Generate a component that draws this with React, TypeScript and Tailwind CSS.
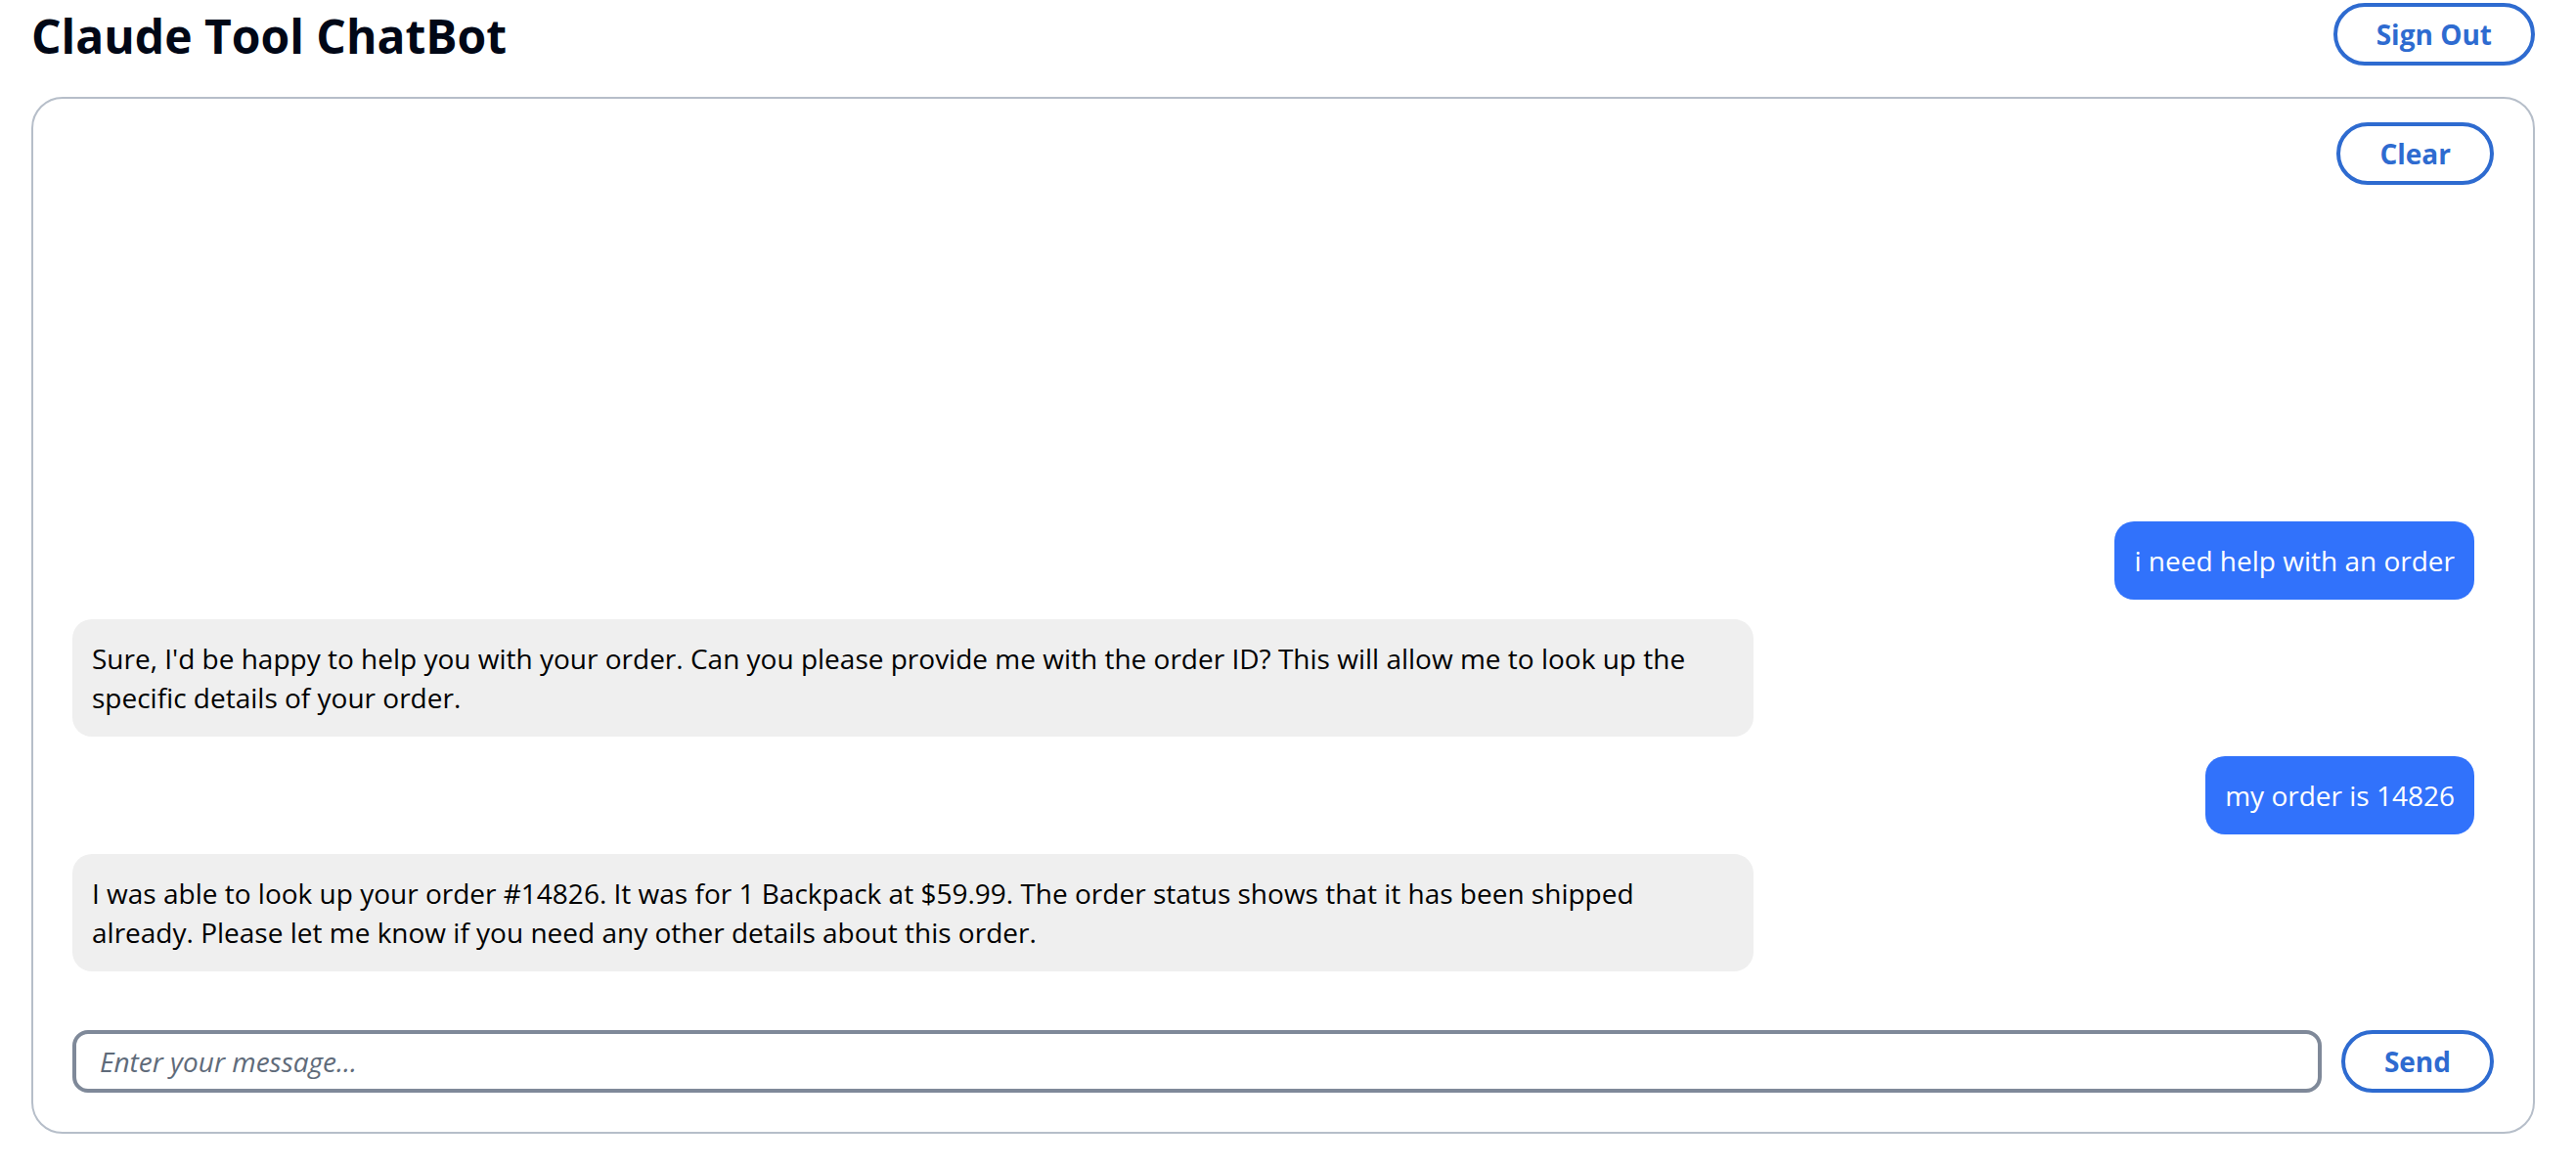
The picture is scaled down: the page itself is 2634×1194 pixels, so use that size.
import { useState } from 'react';

type Message = { from: 'user' | 'bot'; text: string };

const initialMessages: Message[] = [
  { from: 'user', text: 'i need help with an order' },
  {
    from: 'bot',
    text: "Sure, I'd be happy to help you with your order. Can you please provide me with the order ID? This will allow me to look up the specific details of your order.",
  },
  { from: 'user', text: 'my order is 14826' },
  {
    from: 'bot',
    text: 'I was able to look up your order #14826. It was for 1 Backpack at $59.99. The order status shows that it has been shipped already. Please let me know if you need any other details about this order.',
  },
];

const buttonClass =
  'h-16 shrink-0 rounded-full border-4 border-[#2e6bd0] bg-white px-10 text-[28px] font-bold leading-10 text-[#2e6bd0]';

function Bubble({ message }: { message: Message }) {
  return message.from === 'user' ? (
    <li className="max-w-[70%] self-end rounded-[20px] bg-[#3172fb] p-5 text-white">{message.text}</li>
  ) : (
    <li className="max-w-[70%] self-start rounded-[20px] bg-[#efefef] p-5 text-black">{message.text}</li>
  );
}

export default function App() {
  const [messages, setMessages] = useState(initialMessages);
  const [draft, setDraft] = useState('');

  return (
    <div className="flex min-h-screen flex-col bg-white pr-[42px] pl-8 font-['Open_Sans',sans-serif] text-[28px] leading-10">
      <header className="flex h-[70px] items-center justify-between">
        <h1 className="pt-1 text-[48px] font-bold leading-[60px] text-[#000716]">Claude Tool ChatBot</h1>
        <button type="button" className={buttonClass}>Sign Out</button>
      </header>
      <main className="mt-[29px] mb-[35px] flex flex-1 flex-col rounded-[32px] border-2 border-[#b6bec9] px-10 pt-6 pb-10">
        <div className="flex justify-end">
          <button type="button" className={buttonClass} onClick={() => setMessages([])}>Clear</button>
        </div>
        <ul className="flex flex-1 flex-col justify-end gap-5 pr-5 pb-[60px]">
          {messages.map((message, index) => (
            <Bubble key={index} message={message} />
          ))}
        </ul>
        <form
          className="flex gap-5"
          onSubmit={(event) => {
            event.preventDefault();
            if (draft.trim()) setMessages([...messages, { from: 'user', text: draft }]);
            setDraft('');
          }}
        >
          <input
            type="text"
            aria-label="Message"
            placeholder="Enter your message..."
            value={draft}
            onChange={(event) => setDraft(event.target.value)}
            className="h-16 min-w-0 flex-1 rounded-2xl border-4 border-[#7f8999] bg-white px-6 text-[28px] text-[#000716] placeholder:italic placeholder:text-[#5f6b7a]"
          />
          <button type="submit" className={buttonClass}>Send</button>
        </form>
      </main>
    </div>
  );
}
